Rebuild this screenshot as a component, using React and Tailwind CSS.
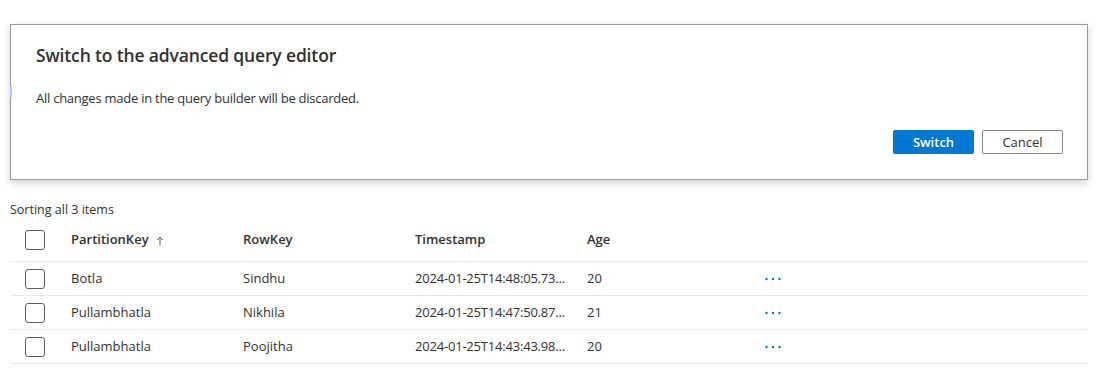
import React from "react";

function Checkbox() {
  return <div className="w-[20px] h-[20px] border border-[#605e5c] rounded-[3px] bg-white" />;
}

function Dots() {
  return (
    <svg width="18" height="4" viewBox="0 0 18 4" className="block">
      <circle cx="2.5" cy="2" r="1.2" fill="#0078d4" />
      <circle cx="9" cy="2" r="1.2" fill="#0078d4" />
      <circle cx="15.5" cy="2" r="1.2" fill="#0078d4" />
    </svg>
  );
}

const rows = [
  ["Botla", "Sindhu", "2024-01-25T14:48:05.73...", "20"],
  ["Pullambhatla", "Nikhila", "2024-01-25T14:47:50.87...", "21"],
  ["Pullambhatla", "Poojitha", "2024-01-25T14:43:43.98...", "20"],
];

export default function App() {
  return (
    <div className="relative w-[1100px] h-[391px] bg-white overflow-hidden font-['Open_Sans',sans-serif] text-[#323130] px-[10px] pt-[24px]">
      <div className="w-[1078px] h-[156px] bg-white border border-[#9a9a9a] shadow-[0_3px_8px_rgba(0,0,0,0.18)] pt-[18px] pl-[25px] pr-[24px] pb-[24px] flex flex-col">
        <div className="h-[24px] leading-[24px] text-[17.5px] font-semibold tracking-[-0.15px]">
          Switch to the advanced query editor
        </div>
        <div className="mt-[21px] h-[20px] leading-[20px] text-[13px] tracking-[-0.25px]">
          All changes made in the query builder will be discarded.
        </div>
        <div className="mt-[22px] flex justify-end gap-[8px]">
          <button className="w-[81px] h-[24px] bg-[#0078d4] text-white text-[13px] font-semibold rounded-[2px] leading-none">
            Switch
          </button>
          <button className="w-[81px] h-[24px] bg-white border border-[#8a8886] text-[#323130] text-[13px] font-normal rounded-[2px] leading-none">
            Cancel
          </button>
        </div>
      </div>
      <div className="absolute left-[10px] top-[86px] w-[2px] h-[11px] bg-[#a9c9ee]" />

      <div className="mt-[21px] w-[1077px]">
        <div className="h-[18px] leading-[18px] text-[12.5px]">Sorting all 3 items</div>
        <div className="flex items-center h-[43px] border-b border-[#edebe9] text-[13px] font-semibold">
          <div className="w-[61px] pl-[15px]"><Checkbox /></div>
          <div className="w-[172px] flex items-center gap-[7px]">
            <span>PartitionKey</span>
            <svg width="8" height="10" viewBox="0 0 8 10" className="mt-[1px]">
              <path d="M4 1.2V9.5M1.2 4L4 1.2L6.8 4" stroke="#605e5c" strokeWidth="1" fill="none" />
            </svg>
          </div>
          <div className="w-[172px]">RowKey</div>
          <div className="w-[172px]">Timestamp</div>
          <div className="w-[177px]">Age</div>
        </div>
        {rows.map((r, i) => (
          <div key={i} className="flex items-center h-[34px] border-b border-[#edebe9] text-[13px]">
            <div className="w-[61px] pl-[15px]"><Checkbox /></div>
            <div className="w-[172px]">{r[0]}</div>
            <div className="w-[172px]">{r[1]}</div>
            <div className="w-[172px] tracking-[-0.2px]">{r[2]}</div>
            <div className="w-[177px]">{r[3]}</div>
            <div className="pt-[1px]"><Dots /></div>
          </div>
        ))}
      </div>
    </div>
  );
}
